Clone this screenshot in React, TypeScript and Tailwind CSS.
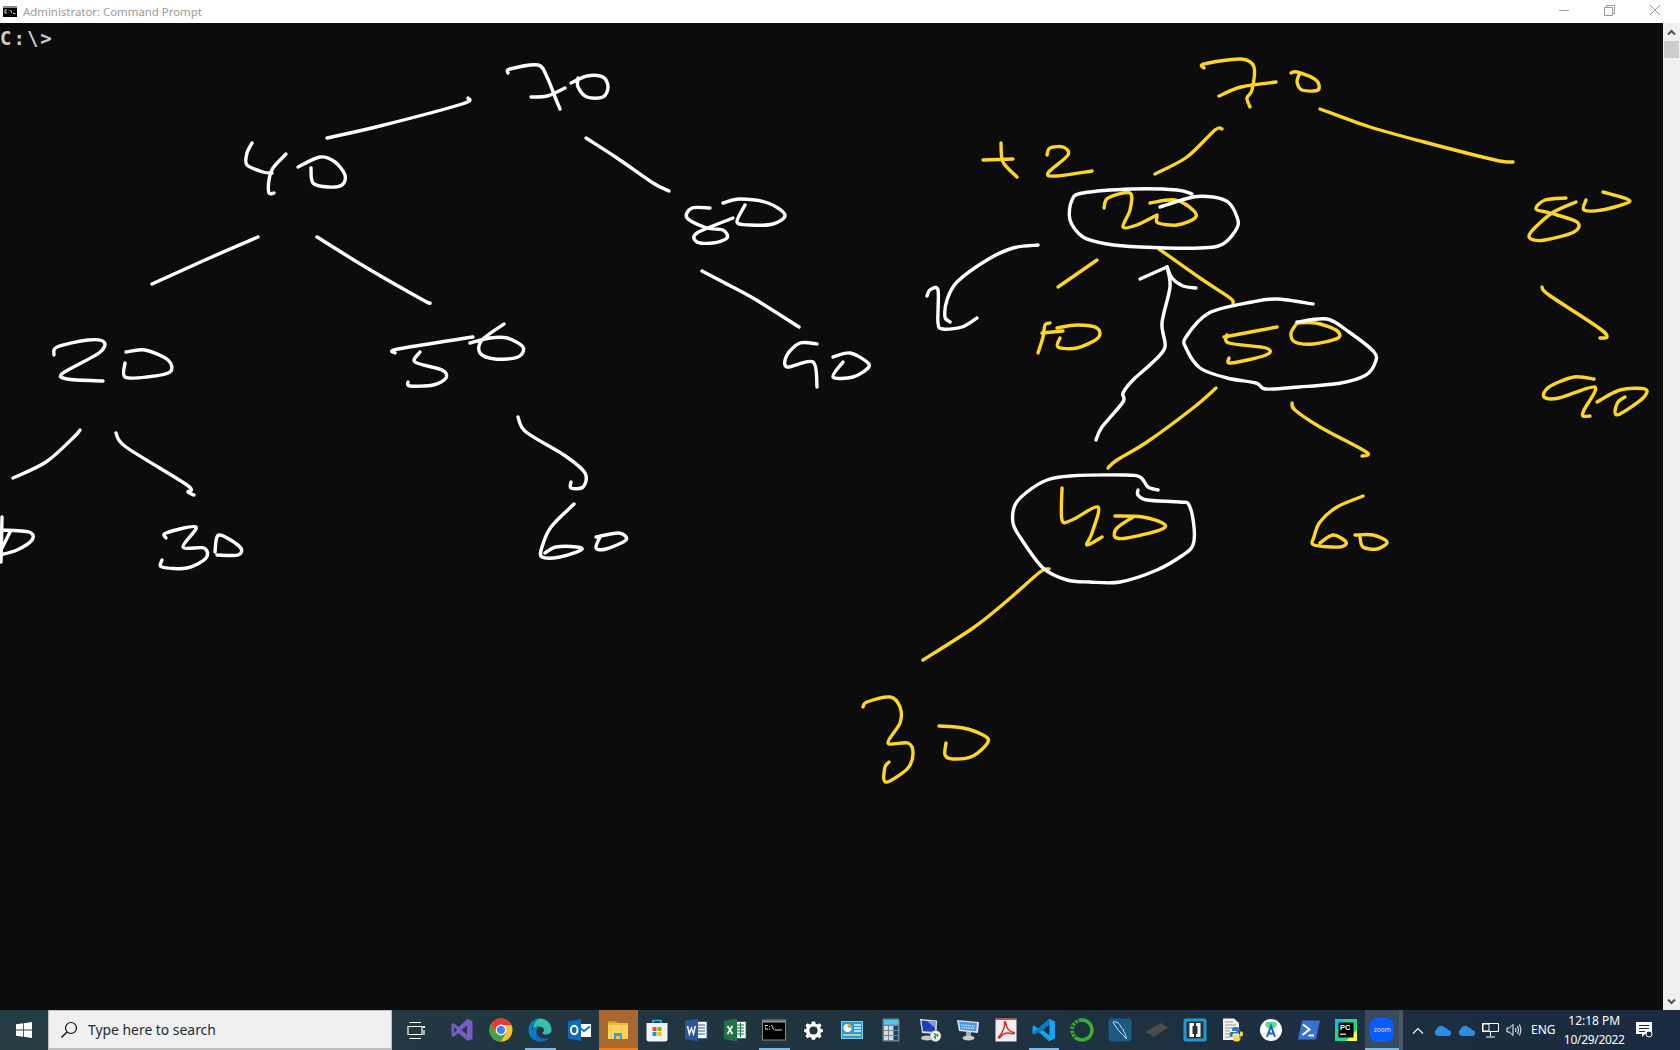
import React from "react";

type P = [number, number];
const W = "#ffffff";
const Y = "#fdd526";

const strokes: { c: string; p: P[] }[] = [
  // left tree
  { c: W, p: [[468,98],[462,104],[380,126],[327,138]] },
  { c: W, p: [[252,143],[247,153],[247,165],[263,172],[272,173]] },
  { c: W, p: [[286,154],[273,168],[269,180],[269,193],[274,193]] },
  { c: W, p: [[298,167],[320,157],[335,162],[345,175],[342,185],[328,187],[313,183],[311,168]] },
  { c: W, p: [[152,284],[205,260],[258,237]] },
  { c: W, p: [[317,237],[367,268],[423,300],[430,303]] },
  { c: W, p: [[508,73],[510,69],[538,65],[547,77],[555,97],[560,109]] },
  { c: W, p: [[531,97],[547,96],[565,88]] },
  { c: W, p: [[571,83],[587,76],[603,77],[608,87],[603,97],[587,97],[578,87],[578,78]] },
  { c: W, p: [[586,138],[617,158],[653,183],[669,191]] },
  { c: W, p: [[710,208],[692,208],[687,218],[707,228],[723,230],[727,238],[713,243],[697,242],[697,233],[733,218]] },
  { c: W, p: [[723,203],[740,199],[768,203],[785,215],[773,224],[750,225],[737,222],[745,205]] },
  { c: W, p: [[702,271],[723,282],[753,298],[799,327]] },
  { c: W, p: [[817,344],[800,343],[787,355],[787,367],[813,362],[817,387]] },
  { c: W, p: [[843,362],[833,377],[853,377],[868,368],[867,362],[850,353],[833,357]] },
  { c: W, p: [[504,324],[482,340],[480,353],[495,359],[518,357],[523,347],[507,338],[490,338],[470,343]] },
  { c: W, p: [[54,355],[57,347],[88,340],[104,342],[99,353],[63,373],[67,379],[103,381]] },
  { c: W, p: [[126,352],[145,350],[168,360],[170,372],[147,377],[125,377],[125,363]] },
  { c: W, p: [[395,353],[398,349],[473,337]] },
  { c: W, p: [[420,352],[415,362],[442,370],[446,378],[433,385],[410,386],[408,382]] },
  { c: W, p: [[80,430],[74,437],[46,462],[13,478]] },
  { c: W, p: [[116,433],[126,447],[187,485],[188,492],[194,495]] },
  { c: W, p: [[2,517],[1,562]] },
  { c: W, p: [[0,530],[29,532],[32,540],[17,550],[0,555]] },
  { c: W, p: [[10,532],[2,548]] },
  { c: W, p: [[166,538],[166,533],[196,527],[183,547],[204,548],[206,558],[187,568],[162,567],[162,560]] },
  { c: W, p: [[215,552],[219,535],[240,547],[238,555],[217,555]] },
  { c: W, p: [[518,417],[526,432],[564,455],[585,473],[583,487],[571,488],[571,482]] },
  { c: W, p: [[574,504],[551,527],[542,547],[542,557],[560,557],[581,550],[577,547],[556,547],[545,553]] },
  { c: W, p: [[596,537],[619,533],[626,540],[606,549],[596,548],[600,537]] },
  // right tree yellow
  { c: Y, p: [[983,160],[1013,159]] },
  { c: Y, p: [[1001,143],[1003,162],[1017,177]] },
  { c: Y, p: [[1047,155],[1050,148],[1063,147],[1068,155],[1048,173],[1057,176],[1092,171]] },
  { c: Y, p: [[1222,129],[1215,130],[1187,157],[1155,174]] },
  { c: Y, p: [[1204,68],[1204,64],[1241,59],[1254,67],[1252,90],[1247,98],[1250,107]] },
  { c: Y, p: [[1219,96],[1241,87],[1276,82]] },
  { c: Y, p: [[1291,73],[1297,72],[1316,80],[1318,90],[1302,90],[1297,82],[1299,75]] },
  { c: Y, p: [[1320,109],[1370,127],[1424,142],[1495,160],[1513,162]] },
  { c: Y, p: [[1566,198],[1545,200],[1536,209],[1550,213],[1577,222],[1574,232],[1545,240],[1531,239],[1531,232],[1552,213],[1576,202]] },
  { c: Y, p: [[1603,192],[1627,199],[1627,203],[1602,210],[1584,210],[1586,200]] },
  { c: Y, p: [[1542,287],[1549,295],[1599,328],[1607,337],[1600,338]] },
  { c: Y, p: [[1594,379],[1574,377],[1549,387],[1544,397],[1559,398],[1595,387],[1584,410],[1583,416],[1590,416]] },
  { c: Y, p: [[1597,402],[1620,390],[1645,389],[1643,398],[1620,414],[1615,412],[1618,402],[1625,397]] },
  { c: Y, p: [[1104,208],[1108,198],[1130,193],[1130,210],[1123,227],[1137,225],[1157,215]] },
  { c: Y, p: [[1150,203],[1175,200],[1193,210],[1195,218],[1177,225],[1158,223],[1157,217]] },
  { c: Y, p: [[1097,260],[1058,287]] },
  { c: Y, p: [[1038,353],[1043,337],[1045,325],[1050,323]] },
  { c: Y, p: [[1042,333],[1063,331]] },
  { c: Y, p: [[1060,338],[1058,347],[1077,348],[1098,338],[1097,328],[1077,325],[1057,328]] },
  { c: Y, p: [[1159,249],[1200,278],[1230,298],[1233,303]] },
  { c: Y, p: [[1224,337],[1277,327]] },
  { c: Y, p: [[1227,335],[1229,343],[1266,348],[1266,355],[1231,363],[1229,358]] },
  { c: Y, p: [[1297,323],[1291,333],[1295,342],[1313,344],[1338,338],[1336,330],[1316,323],[1297,323]] },
  { c: Y, p: [[1216,388],[1193,408],[1147,442],[1117,460],[1108,468]] },
  { c: Y, p: [[1292,403],[1295,410],[1320,427],[1363,450],[1368,455],[1362,456]] },
  { c: Y, p: [[1062,488],[1062,520],[1072,520],[1098,507],[1092,533],[1087,545],[1102,537]] },
  { c: Y, p: [[1115,516],[1143,517],[1164,524],[1160,530],[1127,538],[1115,537],[1117,528],[1133,517]] },
  { c: Y, p: [[1363,496],[1337,507],[1320,522],[1314,537],[1314,545],[1340,547],[1346,542],[1333,535],[1320,543]] },
  { c: Y, p: [[1355,535],[1373,535],[1387,542],[1377,549],[1363,547],[1360,537]] },
  { c: Y, p: [[1049,569],[1040,572],[1008,600],[973,628],[923,660]] },
  { c: Y, p: [[863,707],[867,702],[890,697],[900,707],[900,723],[888,743],[908,743],[913,753],[908,768],[890,781],[884,780],[885,767],[889,762]] },
  { c: Y, p: [[939,726],[963,728],[983,735],[988,742],[973,756],[953,759],[945,755],[946,743]] },
  // right tree white
  { c: W, p: [[1192,194],[1177,190],[1133,189],[1083,193],[1072,200],[1070,220],[1083,237],[1107,244],[1140,247],[1200,248],[1223,244],[1237,228],[1237,217],[1228,202],[1213,197],[1193,197],[1160,207]] },
  { c: W, p: [[1038,245],[1013,248],[987,260],[957,282],[947,300],[945,317],[950,322]] },
  { c: W, p: [[927,296],[930,290],[938,290],[938,323],[943,329],[962,327],[977,318]] },
  { c: W, p: [[1140,279],[1167,267]] },
  { c: W, p: [[1167,267],[1172,278],[1183,286],[1196,288]] },
  { c: W, p: [[1167,267],[1170,287],[1162,323],[1165,347],[1153,362],[1133,380],[1123,393],[1123,402],[1102,427],[1096,440]] },
  { c: W, p: [[1313,304],[1277,299],[1252,302],[1209,313],[1186,337],[1186,348],[1200,368],[1227,378],[1256,383],[1266,389],[1299,387],[1341,383],[1366,375],[1375,363],[1374,352],[1349,332],[1327,319],[1297,322]] },
  { c: W, p: [[1158,490],[1148,487],[1140,477],[1123,475],[1070,476],[1047,480],[1027,492],[1015,505],[1013,523],[1020,537],[1043,568],[1067,580],[1090,582],[1120,582],[1157,570],[1183,555],[1193,545],[1194,527],[1189,505],[1180,502],[1147,500],[1138,495],[1138,490]] },
];

function smooth(p: P[]): string {
  let d = `M${p[0][0]} ${p[0][1]}`;
  for (let i = 0; i < p.length - 1; i++) {
    const a = p[i - 1] || p[i];
    const b = p[i];
    const c = p[i + 1];
    const e = p[i + 2] || c;
    const t = 0.16;
    d += ` C${b[0] + (c[0] - a[0]) * t} ${b[1] + (c[1] - a[1]) * t} ${c[0] - (e[0] - b[0]) * t} ${c[1] - (e[1] - b[1]) * t} ${c[0]} ${c[1]}`;
  }
  return d;
}

const Ico = ({ children, s = 24 }: { children: React.ReactNode; s?: number }) => (
  <svg width={s} height={s} viewBox="0 0 24 24" className="block">{children}</svg>
);

const icons: React.ReactNode[] = [
  // Visual Studio
  <Ico key="vs"><path fillRule="evenodd" fill="#7a5cc4" d="M17.5 1 L22.5 3 V21 L17.5 23 L8.5 15 L3.5 19 L1.5 18 V6 L3.5 5 L8.5 9 Z M4 9 V15 L7 12 Z M17 7.5 L11.5 12 L17 16.5 Z" /></Ico>,
  // Chrome
  <Ico key="chrome">
    <circle cx="12" cy="12" r="11.5" fill="#fbc02d" />
    <path d="M12 .5 A11.5 11.5 0 0 0 2 6.3 L7 15 L12 7 H22.2 A11.5 11.5 0 0 0 12 .5Z" fill="#e53935" />
    <path d="M2 6.3 A11.5 11.5 0 0 0 12 23.5 L17 15 L7 15Z" fill="#43a047" />
    <circle cx="12" cy="12" r="5.4" fill="#fff" />
    <circle cx="12" cy="12" r="4.2" fill="#4285f4" />
  </Ico>,
  // Edge
  <Ico key="edge">
    <path d="M12 .5 C5.5 .5 .5 5.5 .5 12 C.5 18.5 5.5 23.5 12 23.5 C15.5 23.5 18.5 22.4 20.7 20 C15 22 9 19.5 8.5 14 C8.3 11 10 9 12 8.5 C10 8.2 6 9 3.5 12.5 C4.5 6 9 3 13 3 Z" fill="#0c7fc4" />
    <path d="M12 .5 C18.5 .5 23.5 5.5 23.5 12 C23.5 15 21 16.5 18 16.5 C16 16.5 14 16 14.5 14.5 C16 14 16.5 12 15.5 10.5 C14 8 9 7.5 5 10.5 C6 4.5 9.5 .5 12 .5Z" fill="#35c1a8" />
    <path d="M8.5 13 C8.5 19 15 22.5 20.7 20 C18.5 22.4 15.5 23.5 12 23.5 C8 23.5 6.5 18 8.5 13Z" fill="#1565c0" />
  </Ico>,
  // Outlook
  <Ico key="outlook">
    <rect x="10" y="6" width="14" height="13" fill="#fff" />
    <path d="M11 8.5 L17 13 L23 8.5" fill="none" stroke="#0f6cbd" strokeWidth="1.8" />
    <path d="M1 3.5 L14 1 V23 L1 20.5Z" fill="#0f6cbd" />
    <ellipse cx="7.2" cy="12" rx="3.3" ry="4.2" fill="none" stroke="#fff" strokeWidth="2" />
  </Ico>,
  // Explorer
  <Ico key="explorer">
    <path d="M2 3 H10 L12 5 H2Z" fill="#d49a1e" />
    <rect x="2" y="5" width="20" height="16" fill="#fbd35a" />
    <rect x="2" y="5" width="20" height="2" fill="#f0b93a" />
    <path d="M8 15 H16 V21 H14 V18 H10 V21 H8Z" fill="#3aa1dd" />
    <rect x="10" y="18" width="4" height="3" fill="#f6c544" />
  </Ico>,
  // Store
  <Ico key="store">
    <path d="M8 5 V2.5 H16 V5" fill="none" stroke="#29b6f6" strokeWidth="1.6" />
    <path d="M1.5 5 H22.5 V21 A2.5 2.5 0 0 1 20 23.5 H4 A2.5 2.5 0 0 1 1.5 21Z" fill="#f5f5f5" />
    <rect x="7.5" y="9" width="4" height="4" fill="#f25022" />
    <rect x="12.5" y="9" width="4" height="4" fill="#7fba00" />
    <rect x="7.5" y="14" width="4" height="4" fill="#00a4ef" />
    <rect x="12.5" y="14" width="4" height="4" fill="#ffb900" />
  </Ico>,
  // Word
  <Ico key="word">
    <rect x="11" y="3.5" width="12" height="17" fill="#fff" stroke="#2b579a" strokeWidth=".8" />
    <path d="M14 7 H21 M14 10 H21 M14 13 H21 M14 16 H21" stroke="#2b579a" strokeWidth="1.2" />
    <path d="M1 3 L14 .5 V23.5 L1 21Z" fill="#2b579a" />
    <path d="M3.5 8 L5.3 16 L7.4 10 L9.5 16 L11.3 8" fill="none" stroke="#fff" strokeWidth="1.4" />
  </Ico>,
  // Excel
  <Ico key="excel">
    <rect x="11" y="3.5" width="12" height="17" fill="#f5f5f5" stroke="#217346" strokeWidth=".8" />
    <path d="M14 7 H21 M14 10 H21 M14 13 H21 M14 16 H21 M17.5 5 V19" stroke="#217346" strokeWidth="1" />
    <path d="M1 3 L14 .5 V23.5 L1 21Z" fill="#217346" />
    <path d="M4.5 8 L9.5 16 M9.5 8 L4.5 16" stroke="#fff" strokeWidth="1.7" />
  </Ico>,
  // CMD
  <Ico key="cmd">
    <rect x=".5" y="2" width="23" height="20" fill="#000" stroke="#888" />
    <rect x="1" y="2.5" width="22" height="2" fill="#9a9a9a" />
    <path d="M3.5 7 H6 V8 H3.5 V10.5 H6 V11.5 H3 V7Z M7 8 H8 V9 H7Z M7 10.5 H8 V11.5 H7Z" fill="#ddd" stroke="none" />
    <path d="M9.5 7 L11.5 11.5 M12.5 12 H20" stroke="#ddd" strokeWidth="1" fill="none" />
  </Ico>,
  // Settings
  <Ico key="settings" s={19}>
    <path fillRule="evenodd" fill="#fff" d="M10 .5 H14 L14.7 3.6 L16.8 4.5 L19.6 2.8 L22.2 5.4 L20.5 8.2 L21.3 10 L23.8 10.5 V14 L21.3 14.6 L20.5 16.4 L22.2 19.2 L19.6 21.8 L16.8 20.1 L14.7 21 L14 23.6 H10 L9.3 21 L7.2 20.1 L4.4 21.8 L1.8 19.2 L3.5 16.4 L2.7 14.6 L.2 14 V10.5 L2.7 10 L3.5 8.2 L1.8 5.4 L4.4 2.8 L7.2 4.5 L9.3 3.6 Z M12 6.8 A5.2 5.2 0 1 0 12 17.2 A5.2 5.2 0 1 0 12 6.8Z" />
  </Ico>,
  // Control panel
  <Ico key="control">
    <rect x="1.5" y="3.5" width="21" height="17" fill="#1f9fd8" stroke="#7fd0ef" />
    <circle cx="7.5" cy="10" r="4" fill="#fff" />
    <path d="M7.5 10 V6 A4 4 0 0 1 11.5 10Z" fill="#f4a12a" />
    <path d="M14 7 H21 M14 10 H21 M14 13 H21" stroke="#dff4fd" strokeWidth="1.4" />
    <path d="M3 17 H21" stroke="#f6d36b" strokeWidth="1.6" />
  </Ico>,
  // Calculator
  <Ico key="calc">
    <rect x="3.5" y=".5" width="17" height="23" rx="1" fill="#77838c" />
    <rect x="5" y="2" width="14" height="4.5" fill="#52c9ec" />
    {[0, 1, 2].flatMap((r) =>
      [0, 1, 2].map((c) => (
        <rect key={`${r}${c}`} x={5 + c * 5} y={8 + r * 5} width="4" height="4" fill={c === 2 ? "#14456e" : "#d5dade"} />
      ))
    )}
  </Ico>,
  // Remote
  <Ico key="remote">
    <path d="M2 1 L19 2.5 L18.5 16 L4 15Z" fill="#dfe3ea" />
    <path d="M3.5 2.5 L17.5 3.8 L17 14 L5 13.2Z" fill="#1a3fb8" />
    <path d="M9 3 L17.5 3.8 L17 10 Z" fill="#7d9bea" />
    <ellipse cx="9" cy="20" rx="6" ry="2.5" fill="#c8c8c8" />
    <circle cx="17.5" cy="18" r="5.5" fill="#f2f2f2" stroke="#8a8a8a" strokeWidth=".6" />
    <path d="M16 15.5 L18 17 L16.5 19 L18 21 M20 16 L19 18.5" stroke="#2e8b3a" strokeWidth="1.4" fill="none" />
  </Ico>,
  // Network
  <Ico key="network">
    <path d="M1 2 L23 4 L22 15 L3 13Z" fill="#dfe5ee" />
    <path d="M3 3.5 L21 5 L20.2 13.3 L4.3 11.8Z" fill="#4a93dd" />
    <path d="M5 7 L19 8 M5.5 9.5 L19 10.5" stroke="#dfeefc" strokeWidth="1.2" strokeDasharray="1.5 .7" />
    <rect x="10" y="14" width="5" height="4" fill="#a8a8a8" />
    <ellipse cx="12.5" cy="20" rx="6" ry="2.5" fill="#c9c9c9" />
  </Ico>,
  // PDF
  <Ico key="pdf">
    <rect x="1.5" y=".5" width="21" height="23" fill="#f4efee" />
    <rect x="1.5" y=".5" width="21" height="1.2" fill="#b01a1a" />
    <path d="M4.5 19 C8 16 11.5 8 10.5 4.5 C10 3 12 3.5 12 5.5 C12 9 15 14 20 14.5 C21 15 20 16.5 17 15.5 C12 14 7.5 16.5 6 19.5 C5.5 20.5 4 20 4.5 19Z" fill="none" stroke="#d32f2f" strokeWidth="1.5" />
  </Ico>,
  // VS Code
  <Ico key="vscode">
    <path d="M17.3 .8 L23 3.6 V20.4 L17.3 23.2 L6 13.6 L2.2 16.6 L.5 15.6 V8.4 L2.2 7.4 L6 10.4 Z M17.5 6.8 L10.4 12 L17.5 17.2 Z" fill="#16a3f0" fillRule="evenodd" />
    <path d="M17.3 .8 L17.5 6.8 L6 15.5 L2.2 16.6 L.5 15.6 Z" fill="#0a6cb8" opacity=".75" />
  </Ico>,
  // Green ring
  <Ico key="ring">
    <circle cx="12" cy="12" r="10" fill="none" stroke="#38b12f" strokeWidth="3.4" />
    <path d="M2 12 A10 10 0 0 1 9 2.5" fill="none" stroke="#0c2c2a" strokeWidth="3.4" strokeDasharray="1.2 2.4" />
    <path d="M5 19 A10 10 0 0 1 2 12" fill="none" stroke="#0c2c2a" strokeWidth="3.4" strokeDasharray="1 2.6" />
  </Ico>,
  // MySQL workbench
  <Ico key="mysql">
    <rect x=".5" y=".5" width="23" height="23" rx="3" fill="#1c5a85" />
    <path d="M5 4 C9 3 12 6 13 9 C14 11 16 11 15.5 13 C17 15 18 18 18.5 21 C16 18 15 17 13 15 C10 12 7 8 5 4Z" fill="none" stroke="#cfe3ef" strokeWidth="1" />
  </Ico>,
  // SSD
  <Ico key="ssd">
    <path d="M.5 14 L15.5 5 L23.5 9.5 L9 19Z" fill="#4a4d50" />
    <path d="M.5 14 L9 19 L23.5 9.5 V11 L9 20.5 L.5 15.5Z" fill="#2b2d2f" />
  </Ico>,
  // Brackets
  <Ico key="brackets">
    <rect x=".5" y=".5" width="23" height="23" rx="2.5" fill="#1d9ad6" />
    <rect x="3.5" y="3.5" width="17" height="17" fill="#26323a" />
    <path d="M11 6.5 H8 V17.5 H11 M13 6.5 H16 V17.5 H13" fill="none" stroke="#fff" strokeWidth="3" />
  </Ico>,
  // Python doc
  <Ico key="python">
    <path d="M2 .5 H13 L18 5 V22 H2Z" fill="#f1f1f1" />
    <path d="M4 4 H12 M4 7 H15 M4 10 H15 M4 13 H9 M4 16 H9 M4 19 H9" stroke="#9a9a9a" strokeWidth="1.1" />
    <path d="M15 9 C11 9 11 11 11 13 H15.5 V14 H10 C8 14 8 19 10 19 H11.5 V17 C11.5 16 12.5 15.5 13 15.5 H17 C18 15.5 18.5 15 18.5 14 V11 C18.5 9.5 17 9 15 9Z" fill="#3776ab" />
    <path d="M15.5 23.5 C19.5 23.5 19.5 21.5 19.5 19.5 H15 V18.5 H20.5 C22.5 18.5 22.5 13.5 20.5 13.5 H19 V15.5 C19 16.5 18 17 17.5 17 H13.5 C12.5 17 12 17.5 12 18.5 V21.5 C12 23 13.5 23.5 15.5 23.5Z" fill="#ffd43b" />
  </Ico>,
  // Android Studio
  <Ico key="android">
    <circle cx="12" cy="12" r="11" fill="#fff" />
    <path d="M7.5 4 H16.5 A3 3 0 0 1 12 9 A3 3 0 0 1 7.5 4Z" fill="#3ddc84" opacity=".9" />
    <path d="M8 19 L12 8 L16 19 M9.5 15.5 H14.5" fill="none" stroke="#1565c0" strokeWidth="2" />
  </Ico>,
  // PowerShell
  <Ico key="ps">
    <path d="M5 2.5 H23 L19 21.5 H1Z" fill="#3a72d0" />
    <path d="M6 6.5 L12.5 11.5 L5.5 17 M11.5 17.5 H17" fill="none" stroke="#fff" strokeWidth="2" />
  </Ico>,
  // PyCharm
  <Ico key="pycharm">
    <rect x="1" y="1" width="22" height="22" fill="#21d789" />
    <path d="M1 1 H12 L1 12Z" fill="#07c3f2" />
    <path d="M23 23 H12 L23 12Z" fill="#fcf84a" />
    <rect x="4.5" y="4.5" width="15" height="15" fill="#000" />
    <text x="6" y="12.2" fontSize="7.5" fontWeight="700" fill="#fff" fontFamily="'Liberation Sans', sans-serif">PC</text>
    <rect x="6" y="15.6" width="6" height="1.2" fill="#fff" />
  </Ico>,
];

const Item = ({ children, kind, narrow }: { children: React.ReactNode; kind?: "open" | "orange"; narrow?: boolean }) => (
  <div
    className={
      "relative flex h-full shrink-0 items-center justify-center " +
      (narrow ? "w-[37.8px] " : "w-[39px] ") +
      (kind === "orange" ? "bg-[#a9682f] " : "")
    }
  >
    {children}
    {kind === "open" && <span className="absolute bottom-0 left-[4px] right-[4px] h-[2px] bg-[#76b9ed]" />}
    {kind === "orange" && <span className="absolute bottom-0 left-0 right-0 h-[2px] bg-[#ff7a00]" />}
  </div>
);

export default function App() {
  return (
    <div className="flex h-[1050px] w-[1680px] flex-col overflow-hidden bg-[#0c0c0c]">
      {/* title bar */}
      <div className="flex h-[23px] shrink-0 items-center bg-white pl-[3px]">
        <svg width="14" height="11" viewBox="0 0 14 11" className="block">
          <rect width="14" height="11" fill="#000" />
          <rect width="14" height="2" fill="#8a8a8a" />
          <path d="M2 4 H4 M2 4 V7 H4 M6 4.5 V5 M6 6.5 V7 M7.5 4 L9 7 M10 7.5 H12.5" stroke="#ddd" strokeWidth="1" fill="none" />
        </svg>
        <span className="ml-[6px] text-[11.4px] leading-none text-[#9a9a9a] [font-family:'Noto_Sans',sans-serif]">
          Administrator: Command Prompt
        </span>
        <div className="ml-auto flex h-full items-center">
          <svg width="46" height="23" viewBox="0 0 46 23" className="block">
            <path d="M15 10.5 H25" stroke="#999" />
          </svg>
          <svg width="46" height="23" viewBox="0 0 46 23" className="block">
            <path d="M14.5 7.5 H22.5 V15.5 H14.5Z M16.5 7 V5.5 H24.5 V13.5 H23" stroke="#999" fill="none" />
          </svg>
          <svg width="44" height="23" viewBox="0 0 44 23" className="block">
            <path d="M14 5 L24 15 M24 5 L14 15" stroke="#999" />
          </svg>
        </div>
      </div>

      {/* console body */}
      <div className="flex min-h-0 flex-1">
        <div className="relative min-w-0 flex-1">
          <div className="pt-[3px] text-[19px] font-bold leading-[24px] tracking-[2px] text-[#cccccc] [font-family:'DejaVu_Sans_Mono',monospace]">
            C:\&gt;
          </div>
          <svg className="absolute inset-0 block" width="1663" height="987" viewBox="0 23 1663 987">
            {strokes.map((s, i) => (
              <path key={i} d={smooth(s.p)} fill="none" stroke={s.c} strokeWidth="3.4" strokeLinecap="round" strokeLinejoin="round" />
            ))}
          </svg>
        </div>
        <div className="flex w-[17px] shrink-0 flex-col bg-[#f0f0f0]">
          <div className="flex h-[18px] items-center justify-center">
            <svg width="9" height="7" viewBox="0 0 9 7" className="block">
              <path d="M1 5.5 L4.5 2 L8 5.5" stroke="#505050" strokeWidth="2" fill="none" />
            </svg>
          </div>
          <div className="mx-[1px] h-[17px] bg-[#cdcdcd]" />
          <div className="flex-1" />
          <div className="flex h-[17px] items-center justify-center">
            <svg width="9" height="7" viewBox="0 0 9 7" className="block">
              <path d="M1 1.5 L4.5 5 L8 1.5" stroke="#505050" strokeWidth="2" fill="none" />
            </svg>
          </div>
        </div>
      </div>

      {/* taskbar */}
      <div className="flex h-[40px] shrink-0 items-center bg-gradient-to-r from-[#233c44] via-[#20343f] to-[#1a2a40] text-white [font-family:'Noto_Sans',sans-serif]">
        <div className="flex h-full w-[48px] shrink-0 items-center justify-center">
          <svg width="16" height="16" viewBox="0 0 16 16" className="block">
            <path fill="#fff" d="M0 2.3 L7.2 1.3 V7.6 H0Z M8 1.2 L16 0 V7.6 H8Z M0 8.4 H7.2 V14.7 L0 13.7Z M8 8.4 H16 V16 L8 14.8Z" />
          </svg>
        </div>
        <div className="flex h-full w-[344px] shrink-0 items-center border border-b-2 border-[#b9bdbf] bg-[#f0f0f0] pl-[11px] text-[#1f2a33]">
          <svg width="18" height="18" viewBox="0 0 18 18" className="block">
            <circle cx="11" cy="7" r="5.5" fill="none" stroke="#111" strokeWidth="1.2" />
            <path d="M7 11 L1.5 16.5" stroke="#111" strokeWidth="1.4" />
          </svg>
          <span className="ml-[10px] text-[13.9px] leading-none">Type here to search</span>
        </div>
        <div className="flex h-full w-[50.5px] shrink-0 items-center justify-center pr-[3px]">
          <svg width="18" height="17" viewBox="0 0 18 17" className="block">
            <path d="M2.5 .5 H14 M2.5 16.5 H14 M1 4.5 H15 V12.5 H1Z" stroke="#fff" strokeWidth="1.2" fill="none" />
            <rect x="16" y="4" width="2" height="2" fill="#fff" />
            <path d="M17 8 V13" stroke="#fff" strokeWidth="1.2" />
          </svg>
        </div>
        <div className="flex h-full shrink-0">
          {icons.slice(0, 2).map((ic, i) => <Item key={i}>{ic}</Item>)}
          <Item kind="open">{icons[2]}</Item>
          <Item>{icons[3]}</Item>
          <Item kind="orange">{icons[4]}</Item>
          {icons.slice(5, 8).map((ic, i) => <Item key={i}>{ic}</Item>)}
          <Item kind="open">{icons[8]}</Item>
          {icons.slice(9, 13).map((ic, i) => <Item key={i}>{ic}</Item>)}
          {icons.slice(13, 15).map((ic, i) => <Item key={i} narrow>{ic}</Item>)}
          <Item kind="open" narrow>{icons[15]}</Item>
          {icons.slice(16).map((ic, i) => <Item key={i} narrow>{ic}</Item>)}
          <div className="relative flex h-full w-[34px] shrink-0 items-center justify-center bg-[#3a4b5e]">
            <div className="flex h-[24px] w-[24px] items-center justify-center rounded-[8px] bg-[#0b5cff] text-[6.5px] leading-none text-[#dbe7ff]">
              zoom
            </div>
            <span className="absolute bottom-0 left-0 right-0 h-[2px] bg-[#76b9ed]" />
          </div>
        </div>
        <div className="h-full w-[4px] shrink-0 bg-[#4a5868]" />

        {/* tray */}
        <div className="flex h-full flex-1 items-center">
          <div className="flex w-[27px] shrink-0 justify-center pl-[2px]">
            <svg width="12" height="7" viewBox="0 0 12 7" className="block">
              <path d="M1 6.5 L6 1.5 L11 6.5" stroke="#fff" strokeWidth="1.1" fill="none" />
            </svg>
          </div>
          {[0, 1].map((i) => (
            <div key={i} className="flex w-[24px] shrink-0 justify-center">
              <svg width="17" height="11" viewBox="0 0 17 11" className="block">
                <path d="M4 11 A3.5 3.5 0 0 1 2.5 4.5 A4.5 4.5 0 0 1 10.5 2.5 A3.5 3.5 0 0 1 14 5 A3 3 0 0 1 14 11Z" fill="#2a8fe0" />
              </svg>
            </div>
          ))}
          <div className="flex w-[24px] shrink-0 justify-center">
            <svg width="17" height="15" viewBox="0 0 17 15" className="block">
              <path d="M.5 .5 H16.5 V8.5 H.5Z M8.5 8.5 V13 M4 14 H13" stroke="#fff" strokeWidth="1" fill="none" />
              <rect x="1" y="1" width="6" height="7" fill="#1c2c3f" stroke="#fff" strokeWidth="1" />
            </svg>
          </div>
          <div className="flex w-[24px] shrink-0 justify-center">
            <svg width="17" height="14" viewBox="0 0 17 14" className="block">
              <path d="M1 5 H3.5 L7 1.5 V12.5 L3.5 9 H1Z M9.5 5 Q10.5 7 9.5 9 M11.5 3 Q13.5 7 11.5 11 M13.5 1.5 Q16.5 7 13.5 12.5" stroke="#fff" strokeWidth="1" fill="none" />
            </svg>
          </div>
          <div className="w-[34px] shrink-0 text-center text-[12px] leading-none">ENG</div>
          <div className="w-[68px] shrink-0 text-center text-[12px] leading-[19px]">
            <div>12:18 PM</div>
            <div className="tracking-[-0.3px]">10/29/2022</div>
          </div>
          <div className="flex w-[32px] shrink-0 justify-center">
            <svg width="17" height="16" viewBox="0 0 17 16" className="block">
              <path d="M0 0 H16 V12 H9 L6 15 V12 H0Z" fill="#fff" />
              <path d="M3 3.5 H13 M3 6.5 H13 M3 9.5 H9" stroke="#1a2a40" strokeWidth="1" />
              <circle cx="13" cy="12" r="3" fill="#1a2a40" stroke="#fff" />
            </svg>
          </div>
        </div>
      </div>
    </div>
  );
}
